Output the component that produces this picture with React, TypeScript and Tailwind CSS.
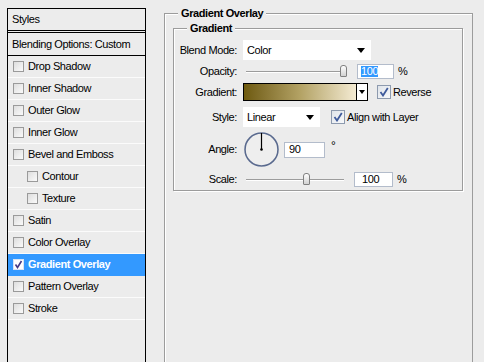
const font = "font-['Liberation_Sans',Arial,sans-serif]";

function SmallBox({ checked }: { checked?: boolean }) {
  return (
    <span
      className={`flex h-[11px] w-[11px] shrink-0 items-center justify-center border ${
        checked ? "border-[#d8e4f5] bg-white" : "border-[#9a9a9a] bg-gradient-to-br from-[#dedede] to-[#fafafa]"
      }`}
    >
      {checked && (
        <svg width="9" height="9" viewBox="0 0 9 9">
          <path d="M1.5 4.5 L3.5 7.5 L7.5 1" fill="none" stroke="#463a86" strokeWidth="1.6" />
        </svg>
      )}
    </span>
  );
}

function CheckBox() {
  return (
    <span className="flex h-[14px] w-[14px] shrink-0 items-center justify-center border border-[#8d9aae] bg-gradient-to-br from-[#dfe4ea] to-[#f8f9fb]">
      <svg width="10" height="10" viewBox="0 0 10 10">
        <path d="M1.5 5 L4 8.5 L8.8 1" fill="none" stroke="#3f5b9c" strokeWidth="1.8" />
      </svg>
    </span>
  );
}

function Arrow() {
  return (
    <svg width="8" height="5" viewBox="0 0 8 5">
      <path d="M0 0 H8 L4 5 Z" fill="#000" />
    </svg>
  );
}

function Slider({ width, thumb }: { width: number; thumb: number }) {
  return (
    <div className="relative flex h-[14px] shrink-0 items-center px-[3px]" style={{ width }}>
      <div className="h-px w-full bg-[#9c9c9c] shadow-[0_1px_0_#ffffff]" />
      <div
        className="absolute top-[1px] h-[12px] w-[7px] rounded-t-[3px] rounded-b-[1px] border border-[#808080] bg-gradient-to-b from-white to-[#d2d2d2]"
        style={{ left: thumb }}
      />
    </div>
  );
}

function Input({ width, height, children }: { width: number; height: number; children: React.ReactNode }) {
  return (
    <div
      className="flex shrink-0 items-center border border-[#b3bccb] bg-white pl-[3px] leading-none"
      style={{ width, height }}
    >
      {children}
    </div>
  );
}

const items = [
  { label: "Drop Shadow" },
  { label: "Inner Shadow" },
  { label: "Outer Glow" },
  { label: "Inner Glow" },
  { label: "Bevel and Emboss" },
  { label: "Contour", sub: true },
  { label: "Texture", sub: true },
  { label: "Satin" },
  { label: "Color Overlay" },
  { label: "Gradient Overlay", active: true },
  { label: "Pattern Overlay" },
  { label: "Stroke" },
];

function StylesList() {
  return (
    <div className="ml-[7px] mt-[8px] h-[400px] w-[139px] shrink-0 border border-b-0 border-black">
      <div className="flex h-[24px] items-center border-b-[3px] border-double border-black pl-[4px]">Styles</div>
      <div className="flex h-[23px] items-center border-b border-black pl-[4px]">Blending Options: Custom</div>
      {items.map((item) => (
        <div
          key={item.label}
          className={`flex h-[22px] items-center gap-[4px] border-b ${
            item.active ? "border-[#3399ff] bg-[#3399ff] font-bold text-white" : "border-[#fbfbfb]"
          } ${item.sub ? "pl-[19px]" : "pl-[5px]"}`}
        >
          <SmallBox checked={item.active} />
          <span>{item.label}</span>
        </div>
      ))}
    </div>
  );
}

function Label({ children }: { children: React.ReactNode }) {
  return <span className="w-[64px] shrink-0 pr-[1px] text-right">{children}</span>;
}

function GradientPanel() {
  return (
    <div className="ml-[18px] mt-[13px] h-[400px] w-[309px] shrink-0 border border-[#9c9c9c] shadow-[inset_1px_1px_0_#ffffff]">
      <div className="ml-[13px] -mt-[7px] w-fit bg-[#ececec] px-[3px] font-bold leading-[13px]">Gradient Overlay</div>
      <div className="ml-[8px] mr-[9px] mt-[8px] border border-[#9c9c9c] pb-[4px] shadow-[inset_1px_1px_0_#ffffff,1px_1px_0_#ffffff]">
        <div className="ml-[13px] -mt-[7px] w-fit bg-[#ececec] px-[3px] font-bold leading-[13px]">Gradient</div>

        <div className="mt-[5px] flex h-[20px] items-center gap-[5px]">
          <Label>Blend Mode:</Label>
          <div className="flex h-[20px] w-[128px] items-center justify-between bg-white pl-[4px] pr-[6px]">
            <span>Color</span>
            <Arrow />
          </div>
        </div>

        <div className="mt-[4px] flex h-[14px] items-center gap-[5px]">
          <Label>Opacity:</Label>
          <Slider width={106} thumb={97} />
          <div className="ml-[3px]">
            <Input width={37} height={15}>
              <span className="bg-[#3399ff] text-white">100</span>
            </Input>
          </div>
          <span className="ml-[-1px]">%</span>
        </div>

        <div className="mt-[5px] flex h-[18px] items-center gap-[5px]">
          <Label>Gradient:</Label>
          <div className="flex h-[18px] w-[125px] border border-black">
            <div className="flex-1 bg-gradient-to-r from-[#6e5a0c] via-[#b3a264] to-[#f4ebd3]" />
            <div className="flex w-[11px] items-center justify-center border-l border-black bg-white">
              <svg width="6" height="4" viewBox="0 0 6 4">
                <path d="M0 0 H6 L3 4 Z" fill="#000" />
              </svg>
            </div>
          </div>
          <div className="ml-[4px] flex items-center gap-[2px]">
            <CheckBox />
            <span>Reverse</span>
          </div>
        </div>

        <div className="mt-[6px] flex h-[20px] items-center gap-[5px]">
          <Label>Style:</Label>
          <div className="flex h-[20px] w-[77px] items-center justify-between bg-white pl-[4px] pr-[6px]">
            <span>Linear</span>
            <Arrow />
          </div>
          <div className="ml-[6px] flex items-center gap-[2px]">
            <CheckBox />
            <span>Align with Layer</span>
          </div>
        </div>

        <div className="mt-[4px] flex h-[37px] items-center gap-[5px]">
          <Label>Angle:</Label>
          <svg width="37" height="37" viewBox="0 0 37 37" className="shrink-0">
            <circle cx="18.5" cy="18.5" r="17" fill="#eeeeee" stroke="#ffffff" strokeWidth="1" />
            <circle cx="18.5" cy="18.5" r="16.5" fill="none" stroke="#5a6a8e" strokeWidth="1.6" />
            <line x1="18.5" y1="18.5" x2="18.5" y2="2" stroke="#000" strokeWidth="1.2" />
            <circle cx="18.5" cy="18.5" r="1.3" fill="#000" />
          </svg>
          <div className="ml-[-1px]">
            <Input width={41} height={16}>
              <span className="pl-[1px]">90</span>
            </Input>
          </div>
          <span className="ml-[1px] self-start pt-[9px] text-[12px] leading-[12px]">°</span>
        </div>

        <div className="mt-[4px] flex h-[14px] items-center gap-[5px]">
          <Label>Scale:</Label>
          <Slider width={104} thumb={60} />
          <div className="ml-[2px]">
            <Input width={39} height={15}>
              <span className="pl-[4px]">100</span>
            </Input>
          </div>
          <span className="ml-[-1px]">%</span>
        </div>
      </div>
    </div>
  );
}

export default function App() {
  return (
    <div
      className={`flex h-[362px] w-[484px] items-start overflow-hidden bg-[#ececec] text-[11px] leading-[13px] tracking-[-0.4px] text-black ${font}`}
    >
      <StylesList />
      <GradientPanel />
    </div>
  );
}
